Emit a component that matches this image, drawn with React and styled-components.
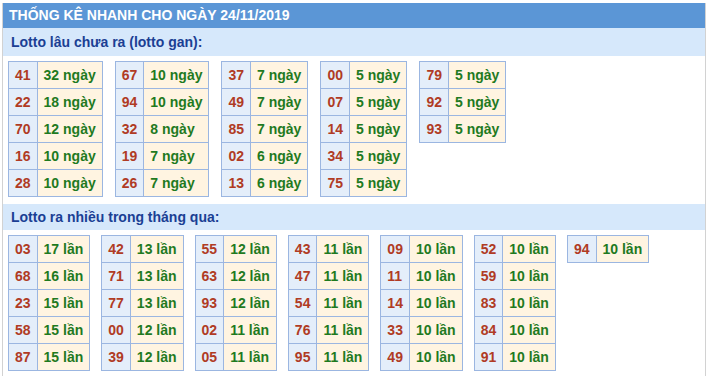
import styled, { createGlobalStyle } from "styled-components";

const GlobalStyle = createGlobalStyle`
  body {
    margin: 0;
    background: #fff;
    font-family: "Liberation Sans", Arial, sans-serif;
  }
`;

const Box = styled.div`
  margin: 3px 0 0 2px;
  width: 702px;
  border-left: 1px solid #d2d2d2;
  border-right: 1px solid #d2d2d2;
  padding-bottom: 10px;
`;

const Header = styled.div`
  height: 25px;
  line-height: 25px;
  padding-left: 6px;
  background: #5b96d6;
  color: #fff;
  font-size: 14px;
  font-weight: bold;
`;

const SubTitle = styled.div`
  height: ${(p) => p.$h || 28}px;
  line-height: ${(p) => p.$h || 28}px;
  padding-left: 8px;
  background: #d6e8fb;
  color: #1b3f94;
  font-size: 14px;
  font-weight: bold;
`;

const Group = styled.div`
  display: flex;
  flex-wrap: wrap;
  align-items: flex-start;
  gap: ${(p) => p.$gap || 12}px;
  padding: 5px 0 7px 5px;
`;

const Table = styled.table`
  border-collapse: collapse;
  font-size: 14px;
  font-weight: bold;
`;

const Cell = styled.td`
  height: 26px;
  padding: 0 6px;
  border: 1px solid #9bb6e1;
  white-space: nowrap;
  background: ${(p) => (p.$num ? "#e4eefa" : "#fff4e1")};
  color: ${(p) => (p.$num ? "#b03b24" : "#1f7a1f")};
`;

const gan = [
  [["41", 32], ["22", 18], ["70", 12], ["16", 10], ["28", 10]],
  [["67", 10], ["94", 10], ["32", 8], ["19", 7], ["26", 7]],
  [["37", 7], ["49", 7], ["85", 7], ["02", 6], ["13", 6]],
  [["00", 5], ["07", 5], ["14", 5], ["34", 5], ["75", 5]],
  [["79", 5], ["92", 5], ["93", 5]],
];

const nhieu = [
  [["03", 17], ["68", 16], ["23", 15], ["58", 15], ["87", 15]],
  [["42", 13], ["71", 13], ["77", 13], ["00", 12], ["39", 12]],
  [["55", 12], ["63", 12], ["93", 12], ["02", 11], ["05", 11]],
  [["43", 11], ["47", 11], ["54", 11], ["76", 11], ["95", 11]],
  [["09", 10], ["11", 10], ["14", 10], ["33", 10], ["49", 10]],
  [["52", 10], ["59", 10], ["83", 10], ["84", 10], ["91", 10]],
  [["94", 10]],
];

const StatTable = ({ rows, unit }) => (
  <Table>
    <tbody>
      {rows.map(([num, count]) => (
        <tr key={num}>
          <Cell $num>{num}</Cell>
          <Cell>
            {count} {unit}
          </Cell>
        </tr>
      ))}
    </tbody>
  </Table>
);

const App = () => {
  return (
    <>
      <GlobalStyle />
      <Box>
        <Header>THỐNG KÊ NHANH CHO NGÀY 24/11/2019</Header>
        <SubTitle>Lotto lâu chưa ra (lotto gan):</SubTitle>
        <Group>
          {gan.map((rows, i) => (
            <StatTable key={i} rows={rows} unit="ngày" />
          ))}
        </Group>
        <SubTitle $h={26}>Lotto ra nhiều trong tháng qua:</SubTitle>
        <Group $gap={11}>
          {nhieu.map((rows, i) => (
            <StatTable key={i} rows={rows} unit="lần" />
          ))}
        </Group>
      </Box>
    </>
  );
};

export default App;
